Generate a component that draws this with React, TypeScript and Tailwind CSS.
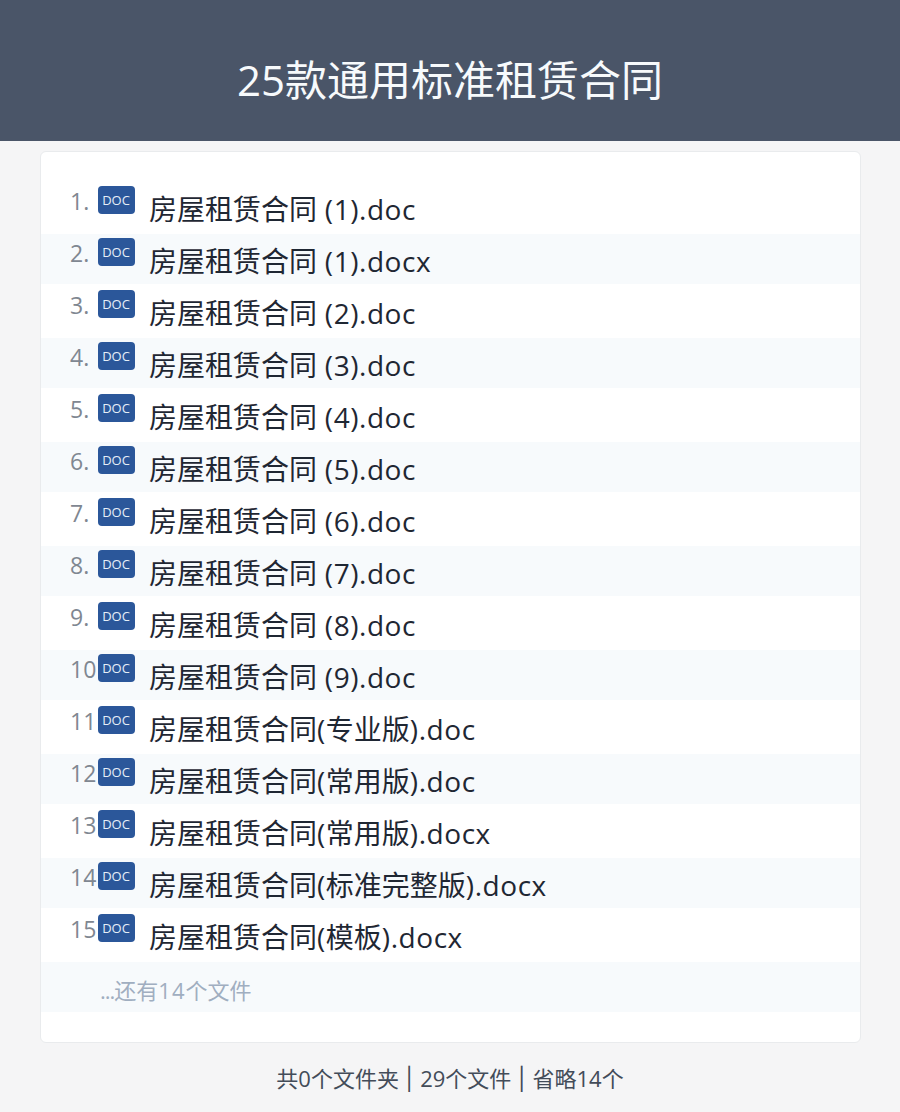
const files = [
  "房屋租赁合同 (1).doc",
  "房屋租赁合同 (1).docx",
  "房屋租赁合同 (2).doc",
  "房屋租赁合同 (3).doc",
  "房屋租赁合同 (4).doc",
  "房屋租赁合同 (5).doc",
  "房屋租赁合同 (6).doc",
  "房屋租赁合同 (7).doc",
  "房屋租赁合同 (8).doc",
  "房屋租赁合同 (9).doc",
  "房屋租赁合同(专业版).doc",
  "房屋租赁合同(常用版).doc",
  "房屋租赁合同(常用版).docx",
  "房屋租赁合同(标准完整版).docx",
  "房屋租赁合同(模板).docx",
];

function FileName({ name }: { name: string }) {
  const parts = name.split(/([\u4e00-\u9fff]+)/).filter(Boolean);
  return (
    <>
      {parts.map((part, i) =>
        /[\u4e00-\u9fff]/.test(part) ? (
          <span key={i}>{part}</span>
        ) : (
          <span key={i} className="tracking-[0.55px]">
            {part}
          </span>
        ),
      )}
    </>
  );
}

export default function App() {
  return (
    <div className="min-h-[1112px] bg-[#f5f5f6] font-['Open_Sans','Noto_Sans_CJK_SC',sans-serif]">
      <header className="flex h-[141px] justify-center bg-[#4a5568] pt-[49px]">
        <h1 className="text-[42px] leading-[62px] font-normal text-[#f7fafc]">25款通用标准租赁合同</h1>
      </header>
      <main className="mt-[10px] mr-[39px] ml-10 rounded-[6px] border border-[#e9ebed] bg-white pt-[30px] pb-[30px]">
        <ul className="flex flex-col gap-[2px]">
          {files.map((name, i) => (
            <li key={name} className={`flex h-[50px] pl-[29px] ${i % 2 === 1 ? "bg-[#f7fafc]" : ""}`}>
              <span className="mt-[3px] w-[28px] text-[23px] leading-[32px] whitespace-nowrap text-[#7f8791]">
                {i < 9 ? `${i + 1}.` : i + 1}
              </span>
              <span className="mt-[4px] flex h-[28px] w-[37px] items-center justify-center rounded-[4px] bg-[#2b579a] pt-[1px] pr-[1px] text-[13px] text-[#e6eef8]">
                DOC
              </span>
              <span className="mt-[5px] ml-[14px] text-[28px] leading-[44px] whitespace-nowrap text-[#1f2733]">
                <FileName name={name} />
              </span>
            </li>
          ))}
          <li className="h-[50px] bg-[#f7fafc] pl-[59px] text-[22px] leading-[56px] text-[#a0aec0]">
            <span className="tracking-[-1px]">...</span>还有<span className="tracking-[1px]">14</span>个文件
          </li>
        </ul>
      </main>
      <footer className="mt-[19px] text-center text-[22px] leading-[32px] text-[#434c59]">
        共0个文件夹<span className="font-['Inter'] tracking-[0.5px]"> | </span>29个文件<span className="font-['Inter'] tracking-[0.5px]"> | </span>省略14个
      </footer>
    </div>
  );
}
